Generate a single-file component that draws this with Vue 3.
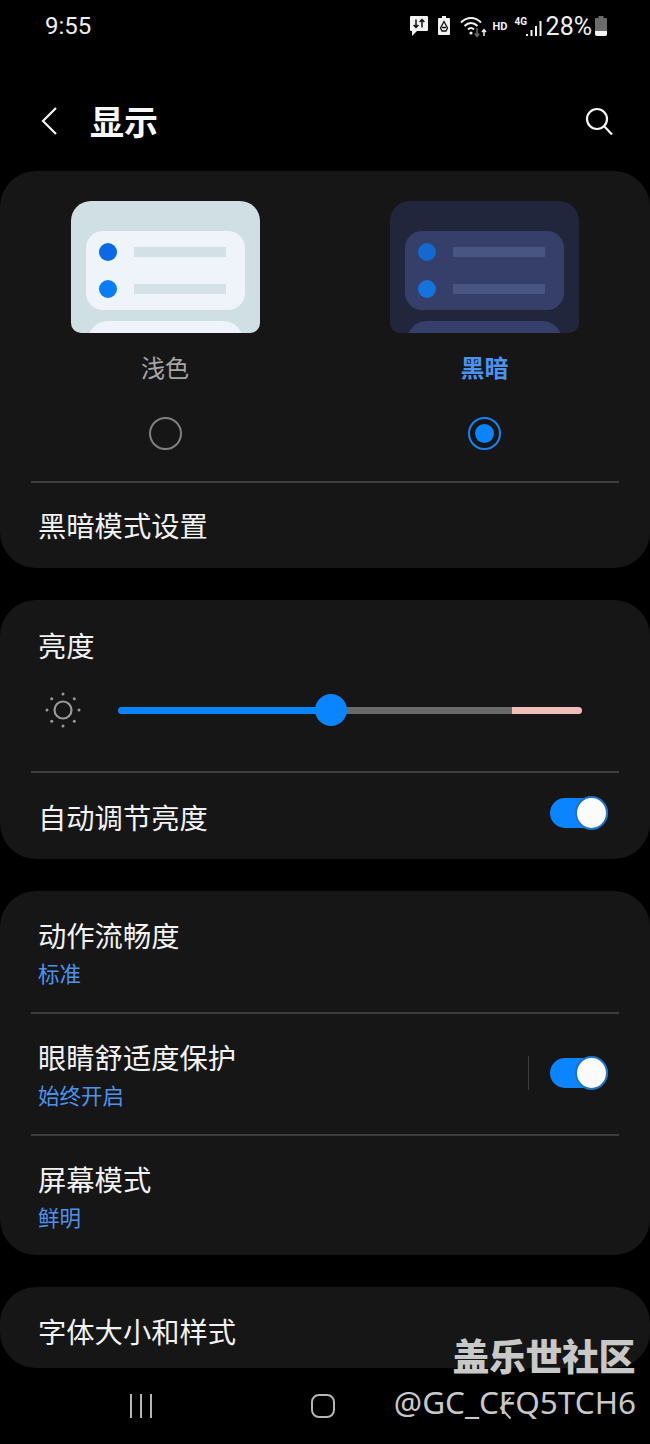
<template>
  <div class="screen">
    <div class="status-bar">
      <span class="time">9:55</span>
      <div class="status-icons">
        <svg width="20" height="24" viewBox="0 0 20 24">
          <path d="M2 1h16a1 1 0 0 1 1 1v13a1 1 0 0 1-1 1H8l-5 5v-5H2a1 1 0 0 1-1-1V2a1 1 0 0 1 1-1z" fill="#f2f2f2" />
          <path d="M7 4.500v8M4.600 10 7 12.500 9.400 10M13 12.500v-8M10.600 7 13 4.500 15.400 7" fill="none" stroke="#111" stroke-width="1.500" />
        </svg>
        <svg class="gap-recycle" width="14" height="24" viewBox="0 0 14 24">
          <path d="M5 1h4v2h3a1 1 0 0 1 1 1v15a1 1 0 0 1-1 1H2a1 1 0 0 1-1-1V4a1 1 0 0 1 1-1h3z" fill="#f2f2f2" />
          <path d="M7 6.500 3.500 13l1.500 3h4l1.500-3zM5 12.500h4" fill="none" stroke="#111" stroke-width="1.300" />
        </svg>
        <svg class="gap-wifi" width="27" height="24" viewBox="0 0 27 24">
          <path d="M1 7.500C7 1.500 15 1.500 21 7.500M4.500 11C8.500 7 13.500 7 17.500 11M8 14.500c2-2 4-2 6 0" fill="none" stroke="#f2f2f2" stroke-width="2" />
          <circle cx="11" cy="18" r="1.600" fill="#f2f2f2" />
          <path d="M17 13v8M14.800 18.500 17 21.500l2.200-3" fill="none" stroke="#666" stroke-width="1.600" />
          <path d="M24 21v-6M22 17l2-2.400 2 2.400" fill="none" stroke="#f2f2f2" stroke-width="1.500" />
        </svg>
        <span class="hd">HD</span>
        <div class="signal">
          <span class="net">4G</span>
          <svg width="20" height="24" viewBox="0 0 20 24">
            <path d="M4 19v2M8.500 15v6M13 11v10M17.500 6v15" fill="none" stroke="#f2f2f2" stroke-width="2" />
          </svg>
        </div>
        <span class="percent">28%</span>
        <svg width="14" height="24" viewBox="0 0 14 24">
          <path d="M4.500 1h5v2h2.500a1 1 0 0 1 1 1v15a2 2 0 0 1-2 2H3a2 2 0 0 1-2-2V4a1 1 0 0 1 1-1h2.500z" fill="#6b6b6b" />
          <path d="M1 16h12v3a2 2 0 0 1-2 2H3a2 2 0 0 1-2-2z" fill="#f4f4f4" />
        </svg>
      </div>
    </div>

    <header class="app-bar">
      <svg class="back" width="16" height="28" viewBox="0 0 16 28">
        <path d="M15 1 2 14l13 13" fill="none" stroke="#f5f5f5" stroke-width="2.200" />
      </svg>
      <h1 class="title">显示</h1>
      <svg class="search" width="28" height="28" viewBox="0 0 28 28">
        <circle cx="12" cy="12" r="10" fill="none" stroke="#f5f5f5" stroke-width="2.200" />
        <path d="m19 19 8 8.500" fill="none" stroke="#f5f5f5" stroke-width="2.200" />
      </svg>
    </header>

    <section class="card theme-card">
      <div class="themes">
        <div v-for="t in themes" :key="t.name" class="theme" :class="t.cls">
          <div class="preview">
            <div class="preview-panel">
              <div class="preview-row"><i class="dot dot-a"></i><b class="line"></b></div>
              <div class="preview-row"><i class="dot"></i><b class="line"></b></div>
            </div>
            <div class="preview-next"></div>
          </div>
          <div class="theme-name">{{ t.name }}</div>
          <div class="radio"><span></span></div>
        </div>
      </div>
      <div class="divider"></div>
      <div class="row-single">黑暗模式设置</div>
    </section>

    <section class="card bright-card">
      <div class="bright-title">亮度</div>
      <div class="slider-row">
        <svg width="38" height="38" viewBox="0 0 38 38">
          <circle cx="19" cy="19" r="8.500" fill="none" stroke="#9a9a9a" stroke-width="2.200" />
          <g fill="#9a9a9a">
            <circle v-for="d in sunDots" :key="d.x + '_' + d.y" :cx="d.x" :cy="d.y" r="1.500" />
          </g>
        </svg>
        <div class="slider">
          <div class="track-on"></div>
          <div class="thumb"></div>
          <div class="track-off"></div>
          <div class="track-hot"></div>
        </div>
      </div>
      <div class="divider"></div>
      <div class="row-auto">
        <span>自动调节亮度</span>
        <div class="toggle"><span></span></div>
      </div>
    </section>

    <section class="card list-card">
      <template v-for="(item, i) in items" :key="item.label">
        <div class="divider" v-if="i > 0"></div>
        <div class="row-double">
          <div class="row-text">
            <div class="row-label">{{ item.label }}</div>
            <div class="row-sub">{{ item.sub }}</div>
          </div>
          <template v-if="item.toggle">
            <div class="v-sep"></div>
            <div class="toggle"><span></span></div>
          </template>
        </div>
      </template>
    </section>

    <section class="card font-card">字体大小和样式</section>

    <nav class="nav-bar">
      <svg width="26" height="26" viewBox="0 0 26 26">
        <path d="M3 1v24M13 1v24M23 1v24" fill="none" stroke="#b5b5b5" stroke-width="2" />
      </svg>
      <svg class="nav-home" width="26" height="26" viewBox="0 0 26 26">
        <rect x="2" y="2" width="22" height="22" rx="7" fill="none" stroke="#b5b5b5" stroke-width="2" />
      </svg>
    </nav>

    <div class="watermark">
      <div class="wm-title">盖乐世社区</div>
      <div class="wm-id">@GC_CFQ5TCH6</div>
    </div>
    <svg class="nav-back" width="13" height="24" viewBox="0 0 13 24">
      <path d="M11.500 1.500 2 12l9.500 10.500" fill="none" stroke="#c4c4c4" stroke-width="2" />
    </svg>
  </div>
</template>

<script setup>
const themes = [
  { name: '浅色', cls: 'light' },
  { name: '黑暗', cls: 'dark' },
]

// dots around the sun icon
const sunDots = Array.from({ length: 8 }, (_, i) => ({
  x: +(19 + 16 * Math.cos((i * Math.PI) / 4)).toFixed(2),
  y: +(19 + 16 * Math.sin((i * Math.PI) / 4)).toFixed(2),
}))

const items = [
  { label: '动作流畅度', sub: '标准' },
  { label: '眼睛舒适度保护', sub: '始终开启', toggle: true },
  { label: '屏幕模式', sub: '鲜明' },
]
</script>

<style>
html,
body {
  background: #000;
}
</style>

<style scoped>
* {
  box-sizing: border-box;
}

.screen {
  position: relative;
  width: 650px;
  height: 1444px;
  overflow: hidden;
  background: #000;
  color: #f2f2f2;
  font-family: "Noto Sans CJK SC", "Noto Sans", sans-serif;
}

.status-bar {
  height: 52px;
  padding: 14px 42px 0 45px;
  display: flex;
  justify-content: space-between;
  align-items: flex-start;
}

.time {
  font: 24px/24px Roboto, sans-serif;
  color: #eee;
}

.status-icons {
  display: flex;
  align-items: center;
  height: 26px;
}

.gap-recycle {
  margin-left: 8px;
}

.gap-wifi {
  margin-left: 9px;
}

.hd {
  margin-left: 6px;
  width: 15px;
  font: 700 11px/24px Roboto, sans-serif;
}

.signal {
  position: relative;
  width: 28px;
  margin-left: 7px;
  height: 24px;
  display: flex;
  justify-content: flex-end;
}

.net {
  position: absolute;
  left: 0;
  top: 1px;
  font: 700 10px/12px Roboto, sans-serif;
}

.percent {
  margin-left: 3px;
  margin-right: 2px;
  font: 25px/26px Roboto, sans-serif;
  color: #eee;
}

.app-bar {
  height: 119px;
  padding: 18px 37px 0 41px;
  display: flex;
  align-items: center;
}

.title {
  margin: 0 0 0 33px;
  font-size: 34px;
  line-height: 40px;
  font-weight: 700;
  color: #f7f7f7;
}

.search {
  margin-left: auto;
}

.card {
  background: #161616;
  border-radius: 36px;
  margin-bottom: 32px;
}

.theme-card {
  height: 397px;
  padding-top: 30px;
}

.themes {
  display: grid;
  grid-template-columns: 330px 309px;
}

.theme {
  display: flex;
  flex-direction: column;
  align-items: center;
  height: 280px;
}

.light {
  --outer: #d0dfe4;
  --panel: #eff4fa;
  --bar: #d3e0e5;
  --dot: #0a7df2;
  --dot-a: #0a6ae6;
}

.dark {
  --outer: #22263d;
  --panel: #353f69;
  --bar: #4a5480;
  --dot: #1473dc;
  --dot-a: #1468cf;
}

.preview {
  width: 189px;
  height: 132px;
  flex: none;
  padding: 30px 15px 0;
  border-radius: 20px 20px 10px 10px;
  overflow: hidden;
  background: var(--outer);
}

.preview-panel {
  height: 79px;
  padding: 12px 18px 0 13px;
  border-radius: 17px;
  background: var(--panel);
  display: flex;
  flex-direction: column;
  gap: 19px;
}

.preview-row {
  height: 18px;
  display: flex;
  align-items: center;
  gap: 17px;
}

.dot {
  width: 18px;
  height: 18px;
  border-radius: 50%;
  background: var(--dot);
}

.dot-a {
  background: var(--dot-a);
}

.line {
  width: 92px;
  height: 10px;
  background: var(--bar);
}

.preview-next {
  height: 40px;
  margin: 11px 2px 0;
  border-radius: 20px 20px 0 0;
  background: var(--panel);
}

.theme-name {
  margin-top: 16px;
  font-size: 24px;
  line-height: 36px;
  color: #a6a6a6;
}

.dark .theme-name {
  color: #4d93ee;
  font-weight: 700;
}

.radio {
  margin-top: 32px;
  width: 33px;
  height: 33px;
  border-radius: 50%;
  border: 2px solid #808080;
  display: flex;
  align-items: center;
  justify-content: center;
}

.radio span {
  display: none;
}

.dark .radio {
  border-color: #1583f5;
}

.dark .radio span {
  display: block;
  width: 19px;
  height: 19px;
  border-radius: 50%;
  background: #0a84ff;
}

.divider {
  height: 2px;
  margin: 0 31px;
  background: #3d3d3d;
}

.row-single {
  padding: 0 38px 2px;
  height: 85px;
  display: flex;
  align-items: center;
  font-size: 28.3px;
}

.bright-card {
  height: 259px;
}

.bright-title {
  padding: 24px 38px 0;
  font-size: 28.3px;
  line-height: 42px;
}

.slider-row {
  height: 105px;
  padding: 25px 68px 0 44px;
  display: flex;
  align-items: flex-start;
  gap: 36px;
}

.slider {
  position: relative;
  flex: 1;
  height: 38px;
  display: flex;
  align-items: center;
}

.track-on {
  width: 212px;
  height: 7px;
  border-radius: 4px 0 0 4px;
  background: #0a84ff;
}

.thumb {
  position: absolute;
  left: 197px;
  top: 3px;
  width: 32px;
  height: 32px;
  border-radius: 50%;
  background: #0a84ff;
}

.track-off {
  width: 182px;
  height: 7px;
  background: #6a6a6a;
}

.track-hot {
  flex: 1;
  height: 7px;
  border-radius: 0 4px 4px 0;
  background: #f0bdb9;
}

.row-auto {
  height: 86px;
  padding: 0 42px 0 38px;
  display: flex;
  align-items: center;
  justify-content: space-between;
  font-size: 28.3px;
}

.toggle {
  position: relative;
  width: 58px;
  height: 30px;
  margin-top: -6px;
  border-radius: 15px;
  background: #0a84ff;
}

.toggle span {
  position: absolute;
  right: 0;
  top: -2px;
  width: 33px;
  height: 34px;
  border-radius: 50%;
  background: #fbfbfb;
  border: 2px solid #1f72c8;
}

.list-card {
  height: 364px;
  padding-top: 1px;
}

.row-double {
  height: 120px;
  padding: 0 42px 1px 38px;
  display: flex;
  align-items: center;
}

.row-double .toggle {
  margin-top: -1px;
}

.row-text {
  flex: 1;
}

.row-label {
  font-size: 28.3px;
  line-height: 42px;
}

.row-sub {
  font-size: 21.5px;
  line-height: 34px;
  color: #4d93ee;
}

.v-sep {
  width: 1px;
  height: 34px;
  margin: -1px 21px 0 0;
  background: #3d3d3d;
}

.font-card {
  height: 81px;
  padding: 6px 38px 0;
  margin: 0;
  display: flex;
  align-items: center;
  font-size: 28.3px;
}

.nav-bar {
  height: 76px;
  padding-left: 128px;
  display: flex;
  align-items: center;
}

.nav-home {
  margin-left: 156px;
}

.watermark {
  position: absolute;
  right: 15px;
  top: 1332px;
  text-align: right;
  color: #c8c8c8;
}

.wm-title {
  font-size: 37px;
  line-height: 46px;
  font-weight: 900;
  letter-spacing: -.5px;
}

.wm-id {
  margin-top: 2px;
  margin-right: -1px;
  font: 31.5px/44px "Noto Sans", sans-serif;
}

.nav-back {
  position: absolute;
  left: 499px;
  top: 1396px;
}
</style>
